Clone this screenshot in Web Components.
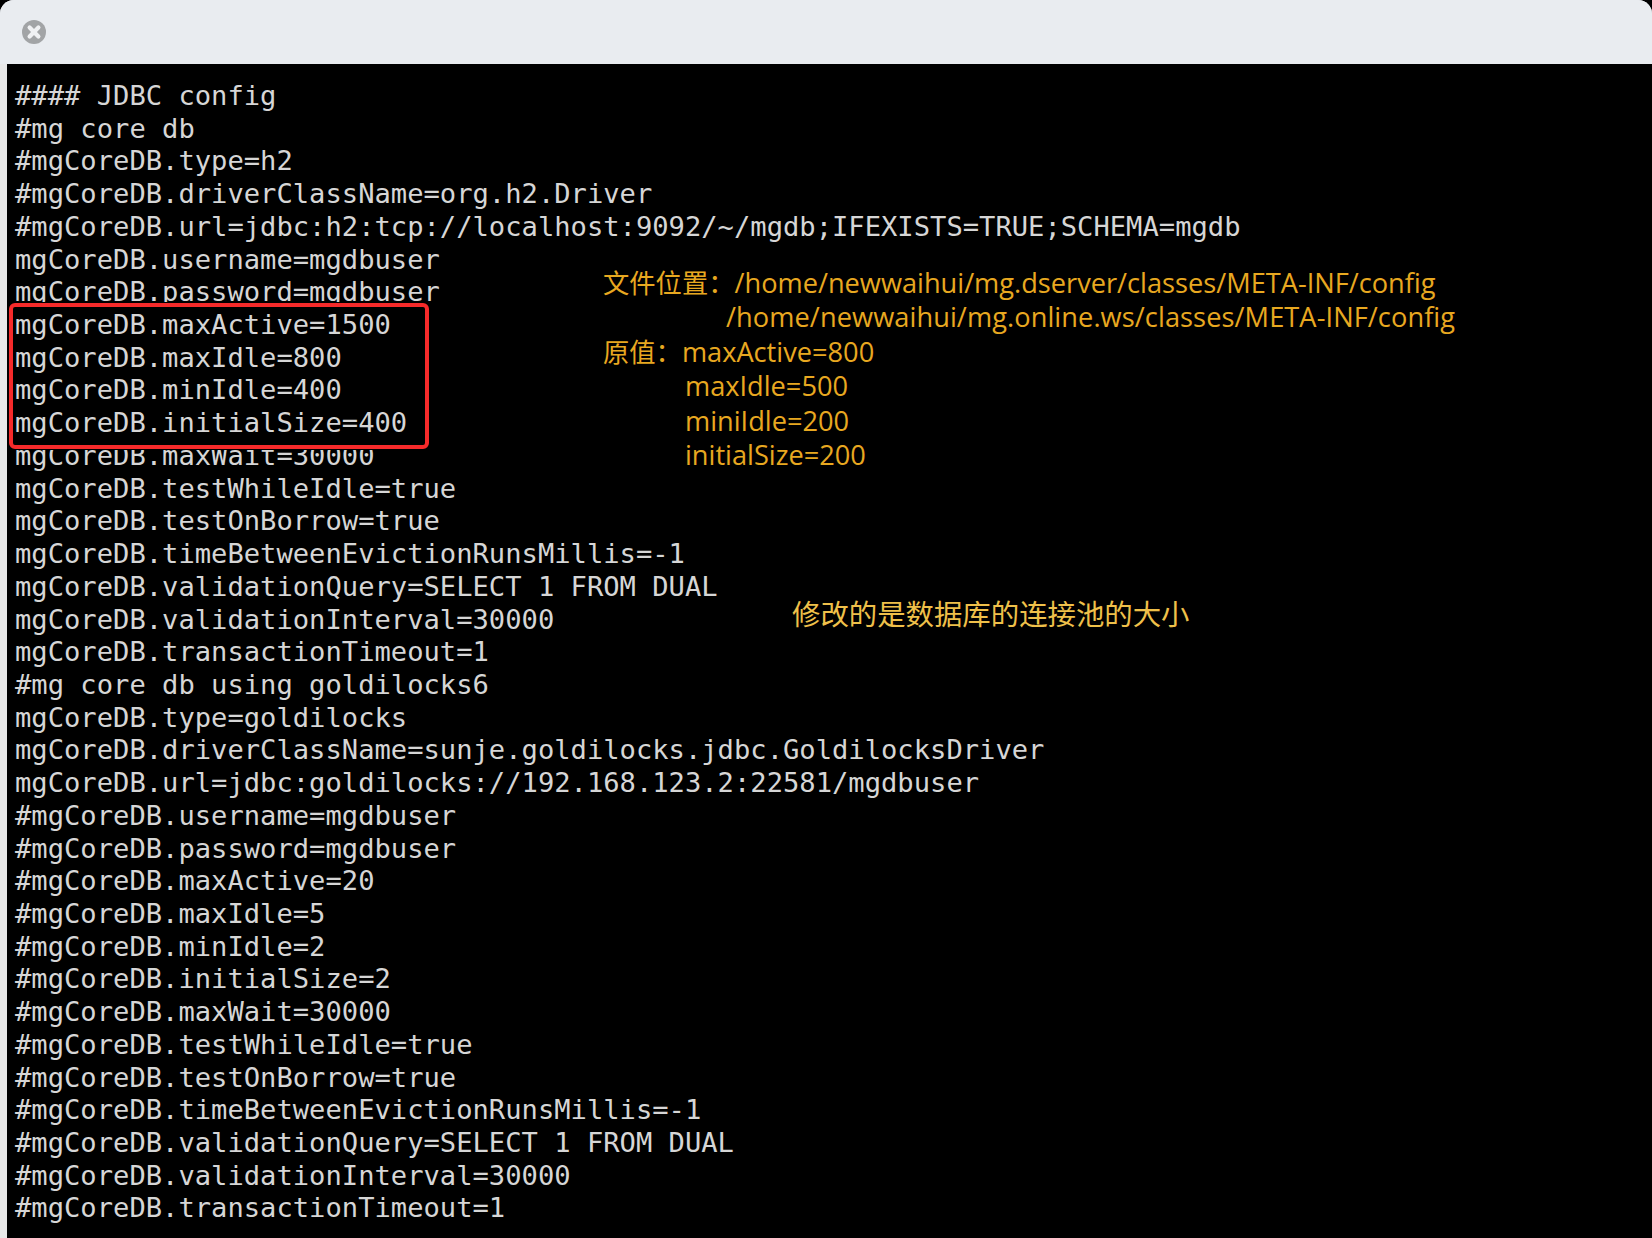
<!DOCTYPE html>
<html>
<head>
<meta charset="utf-8">
<style>
  html, body { margin: 0; padding: 0; background: #000; }
  body { width: 1652px; height: 1238px; overflow: hidden; }
  .cn { font-size: 26.3px; }
</style>
</head>
<body>
<screen-window>
  <config-term></config-term>
  <red-box></red-box>
  <note-block style="left:596px;top:202px">
    <div><span class="cn">文件位置：</span><span>/home/newwaihui/mg.dserver/classes/META-INF/config</span></div>
    <div style="margin-left:123px;letter-spacing:.08px">/home/newwaihui/mg.online.ws/classes/META-INF/config</div>
    <div><span class="cn">原值：</span><span>maxActive=800</span></div>
    <div style="margin-left:82px">maxIdle=500</div>
    <div style="margin-left:82px">miniIdle=200</div>
    <div style="margin-left:82px">initialSize=200</div>
  </note-block>
  <note-block style="left:785px;top:533px;font-size:28.4px;color:#efc04a">
    <div>修改的是数据库的连接池的大小</div>
  </note-block>
</screen-window>

<script>
const windowTpl = document.createElement('template');
windowTpl.innerHTML = `
  <style>
    :host { display: flex; flex-direction: column; width: 1652px; height: 1238px; background: #e9ecf0; border-radius: 14px 14px 0 0; overflow: hidden; }
    .bar { flex: 0 0 64px; display: flex; align-items: center; padding-left: 22px; padding-bottom: 1px; box-sizing: border-box; background: #e9ecf0; }
    .bar svg { width: 24px; height: 24px; display: block; }
    .wrap { flex: 1; display: flex; min-height: 0; background: #000; }
    .edge { flex: 0 0 7px; background: #e8e8e8; }
    .body { flex: 1; position: relative; background: #000; }
  </style>
  <div class="bar">
    <svg viewBox="0 0 24 24"><circle cx="12" cy="12" r="12" fill="#a2a4a6"/><path d="M7.6 7.6 16.4 16.4M16.4 7.6 7.6 16.4" stroke="#f0f1f3" stroke-width="4.2" stroke-linecap="round"/></svg>
  </div>
  <div class="wrap">
    <div class="edge"></div>
    <div class="body"><slot></slot></div>
  </div>`;

class ScreenWindow extends HTMLElement {
  constructor() {
    super();
    this.attachShadow({mode: 'open'});
    this.shadowRoot.appendChild(windowTpl.content.cloneNode(true));
  }
}

const LINES = [
  '#### JDBC config',
  '#mg core db',
  '#mgCoreDB.type=h2',
  '#mgCoreDB.driverClassName=org.h2.Driver',
  '#mgCoreDB.url=jdbc:h2:tcp://localhost:9092/~/mgdb;IFEXISTS=TRUE;SCHEMA=mgdb',
  'mgCoreDB.username=mgdbuser',
  'mgCoreDB.password=mgdbuser',
  'mgCoreDB.maxActive=1500',
  'mgCoreDB.maxIdle=800',
  'mgCoreDB.minIdle=400',
  'mgCoreDB.initialSize=400',
  'mgCoreDB.maxWait=30000',
  'mgCoreDB.testWhileIdle=true',
  'mgCoreDB.testOnBorrow=true',
  'mgCoreDB.timeBetweenEvictionRunsMillis=-1',
  'mgCoreDB.validationQuery=SELECT 1 FROM DUAL',
  'mgCoreDB.validationInterval=30000',
  'mgCoreDB.transactionTimeout=1',
  '#mg core db using goldilocks6',
  'mgCoreDB.type=goldilocks',
  'mgCoreDB.driverClassName=sunje.goldilocks.jdbc.GoldilocksDriver',
  'mgCoreDB.url=jdbc:goldilocks://192.168.123.2:22581/mgdbuser',
  '#mgCoreDB.username=mgdbuser',
  '#mgCoreDB.password=mgdbuser',
  '#mgCoreDB.maxActive=20',
  '#mgCoreDB.maxIdle=5',
  '#mgCoreDB.minIdle=2',
  '#mgCoreDB.initialSize=2',
  '#mgCoreDB.maxWait=30000',
  '#mgCoreDB.testWhileIdle=true',
  '#mgCoreDB.testOnBorrow=true',
  '#mgCoreDB.timeBetweenEvictionRunsMillis=-1',
  '#mgCoreDB.validationQuery=SELECT 1 FROM DUAL',
  '#mgCoreDB.validationInterval=30000',
  '#mgCoreDB.transactionTimeout=1'
];

class ConfigTerm extends HTMLElement {
  constructor() {
    super();
    this.attachShadow({mode: 'open'});
    this.shadowRoot.innerHTML = `
      <style>
        :host { display: block; padding: 16px 0 0 8px; font: 27.15px/32.72px "DejaVu Sans Mono", monospace; color: #d6d6d6; }
        div { height: 32.72px; white-space: pre; }
      </style>`;
  }
  connectedCallback() {
    for (const line of LINES) {
      const el = document.createElement('div');
      el.textContent = line;
      this.shadowRoot.appendChild(el);
    }
  }
}

class RedBox extends HTMLElement {
  constructor() {
    super();
    this.attachShadow({mode: 'open'});
    this.shadowRoot.innerHTML = `
      <style>
        :host { position: absolute; left: 2px; top: 239px; width: 420px; height: 146px; box-sizing: border-box; border: 4px solid #f62a2a; border-radius: 6px; box-shadow: 0 0 0 1px #000; }
      </style>`;
  }
}

class NoteBlock extends HTMLElement {
  constructor() {
    super();
    this.attachShadow({mode: 'open'});
    this.shadowRoot.innerHTML = `
      <style>
        :host { position: absolute; display: block; font: 27.2px/34.4px "Open Sans", "Noto Sans CJK SC", sans-serif; color: #e8a820; }
        ::slotted(div) { white-space: pre; }
      </style>
      <slot></slot>`;
  }
}

customElements.define('screen-window', ScreenWindow);
customElements.define('config-term', ConfigTerm);
customElements.define('red-box', RedBox);
customElements.define('note-block', NoteBlock);
</script>
</body>
</html>
